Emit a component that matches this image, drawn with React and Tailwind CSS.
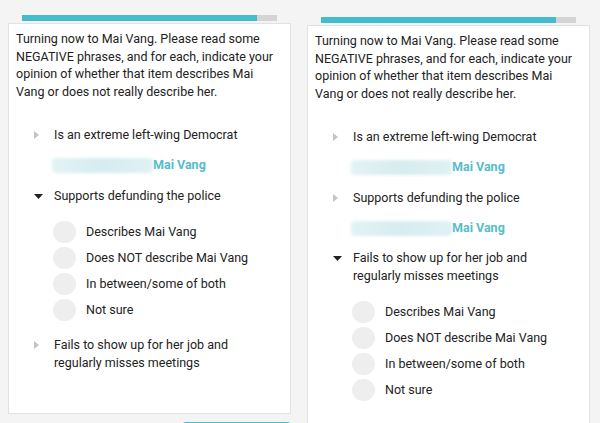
import React from 'react';

const options = ['Describes Mai Vang', 'Does NOT describe Mai Vang', 'In between/some of both', 'Not sure'];

const RightArrow = () => (
  <span className="w-[20px] flex justify-start pt-[5px]">
    <svg width="5" height="8" viewBox="0 0 5 8"><path d="M0 0 L5 4 L0 8 Z" fill="#c4c4c4" /></svg>
  </span>
);

const DownArrow = () => (
  <span className="w-[20px] flex justify-start pt-[7px]">
    <svg width="9" height="5" viewBox="0 0 9 5"><path d="M0 0 L9 0 L4.5 5 Z" fill="#222" /></svg>
  </span>
);

const Answered = () => (
  <div className="flex items-center h-[16px] ml-[36px] mt-[14px]">
    <div className="w-[101px] h-[15px] rounded-sm bg-gradient-to-r from-[#e3f3f4] via-[#d6ecee] to-[#e0f1f3] blur-[1.5px]"></div>
    <span className="text-[12.5px] font-bold text-[#55bccb]">Mai Vang</span>
  </div>
);

const Item = ({ open, children, top = 'mt-[13px]' }) => (
  <div className={`flex ml-[18px] ${top}`}>
    {open ? <DownArrow /> : <RightArrow />}
    <span className="leading-[17.5px] w-[200px]">{children}</span>
  </div>
);

const Options = () => (
  <div className="flex flex-col gap-[4px] ml-[37px] mt-[17px]">
    {options.map((o) => (
      <div key={o} className="flex items-center h-[22px]">
        <div className="w-[23px] h-[22px] rounded-full bg-[#eeeeee]"></div>
        <span className="ml-[10px]">{o}</span>
      </div>
    ))}
  </div>
);

const Progress = () => (
  <div className="mx-[14px] h-[6px] shrink-0 flex">
    <div className="w-[235px] bg-[#43bdcc]"></div>
    <div className="flex-1 bg-[#d4d4d4]"></div>
  </div>
);

const Intro = () => (
  <p className="leading-[17.5px]">
    Turning now to Mai Vang. Please read some NEGATIVE phrases, and for each, indicate your opinion of whether that item describes Mai Vang or does not really describe her.
  </p>
);

export default function App() {
  return (
    <div
      className="w-[600px] h-[423px] overflow-hidden bg-[#f4f4f4] flex gap-[16px] pl-[8px] text-[12.5px] text-[#222222]"
      style={{ fontFamily: 'Roboto, "Liberation Sans", sans-serif' }}
    >
      <div className="w-[283px] pt-[15px] flex flex-col">
        <Progress />
        <div className="shrink-0 mt-[2px] bg-white border border-[#e2e2e2] px-[7px] pt-[6px] pb-[42px]">
          <Intro />
          <Item top="mt-[26px]">Is an extreme left-wing Democrat</Item>
          <Answered />
          <Item open>Supports defunding the police</Item>
          <Options />
          <Item top="mt-[15px]">Fails to show up for her job and regularly misses meetings</Item>
        </div>
        <div className="shrink-0 mt-[8px] ml-auto w-[109px] h-[20px] bg-[#43bdcc] rounded-t-sm"></div>
      </div>
      <div className="w-[283px] pt-[17px] flex flex-col">
        <Progress />
        <div className="shrink-0 mt-[2px] bg-white border border-[#e2e2e2] px-[7px] pt-[6px] pb-[42px]">
          <Intro />
          <Item top="mt-[26px]">Is an extreme left-wing Democrat</Item>
          <Answered />
          <Item>Supports defunding the police</Item>
          <Answered />
          <Item open>Fails to show up for her job and regularly misses meetings</Item>
          <Options />
        </div>
      </div>
    </div>
  );
}
